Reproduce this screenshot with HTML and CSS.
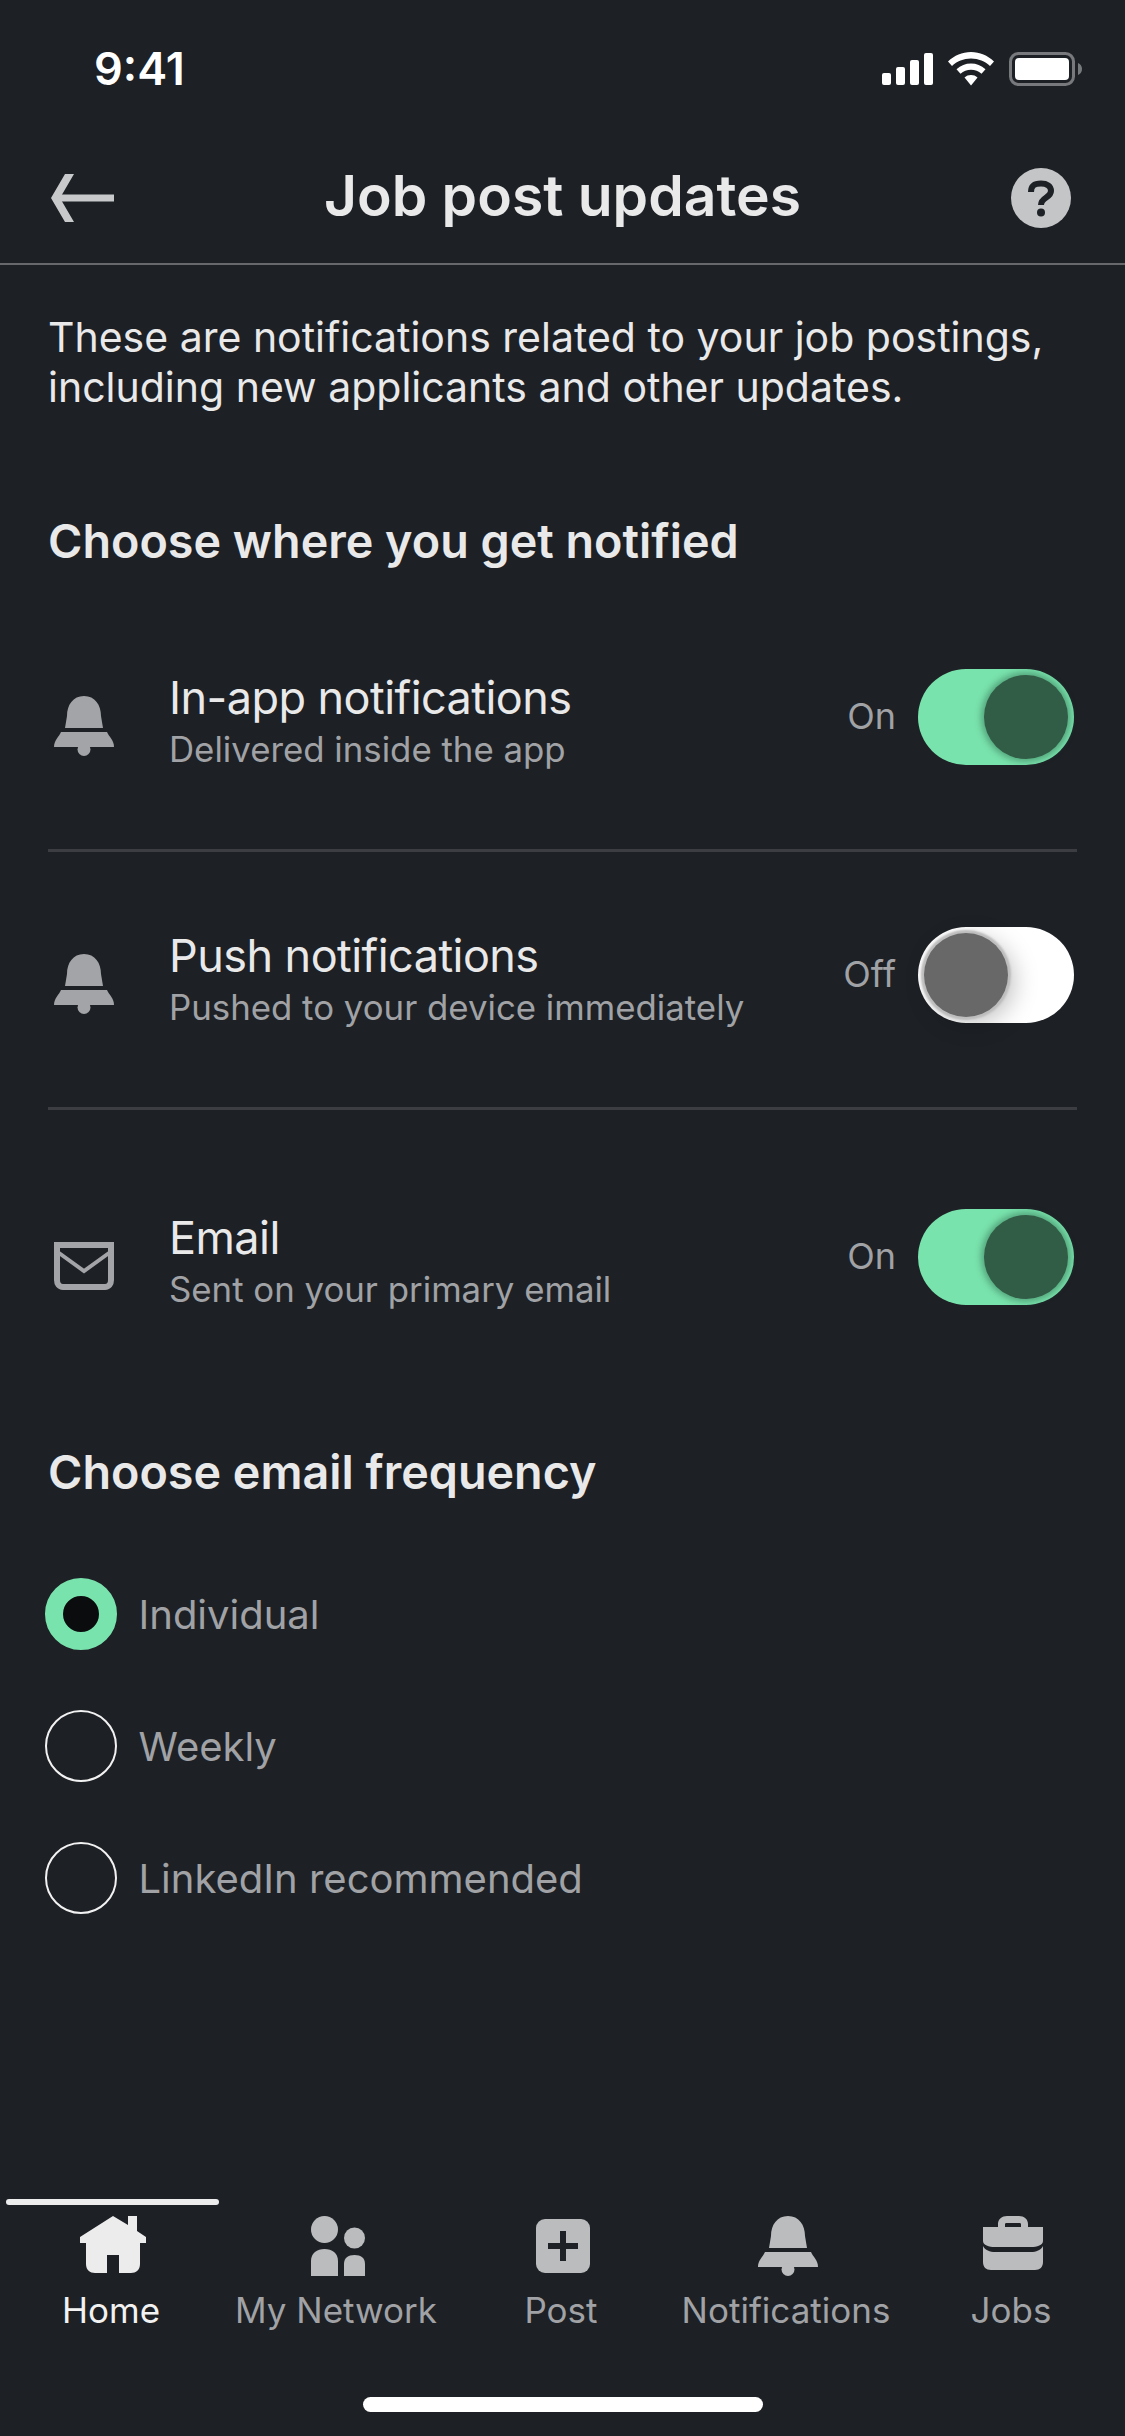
FILE: index.html
```html
<!DOCTYPE html>
<html lang="en">
<head>
    <meta charset="UTF-8">
    <meta name="viewport" content="width=device-width, initial-scale=1.0">
    <title>Job post updates</title>
    <link rel="stylesheet" href="styles.css">
</head>
<body>
    <div class="status-bar">
        <span class="time">9:41</span>
        <div class="status-icons">
            <svg width="51" height="32" viewBox="0 0 51 32" fill="#fff">
                <rect x="0" y="20" width="9" height="12" rx="2"/>
                <rect x="14" y="14" width="9" height="18" rx="2"/>
                <rect x="28" y="7" width="9" height="25" rx="2"/>
                <rect x="42" y="0" width="9" height="32" rx="2"/>
            </svg>
            <svg width="46" height="34" viewBox="0 0 46 34" fill="#fff">
                <path d="M23 0C14 0 6.500 3.500 0 9.500L4 14C9 9.300 15.500 6.500 23 6.500S37 9.300 42 14L46 9.500C39.500 3.500 32 0 23 0Z"/>
                <path d="M23 11.500C17.500 11.500 12.800 13.500 8.500 17.300L12.500 21.700C15.500 19.200 19 17.800 23 17.800S30.500 19.200 33.500 21.700L37.500 17.300C33.200 13.500 28.500 11.500 23 11.500Z"/>
                <path d="M23 23C20.500 23 18.300 23.800 16.500 25.500L23 33.500L29.500 25.500C27.700 23.800 25.500 23 23 23Z"/>
            </svg>
            <svg width="74" height="34" viewBox="0 0 74 34">
                <rect x="1.500" y="1.500" width="63" height="31" rx="8" fill="none" stroke="#77797c" stroke-width="3"/>
                <rect x="6" y="6" width="54" height="22" rx="4" fill="#fff"/>
                <path d="M69 11C71.500 12 73 14 73 17S71.500 22 69 23Z" fill="#77797c"/>
            </svg>
        </div>
    </div>

    <header class="nav">
        <svg class="back" width="64" height="48" viewBox="0 0 64 48" fill="#c8c9cb">
            <polygon points="14,0 23,0 9,24 23,48 14,48 0,24"/>
            <rect x="8" y="20.500" width="55" height="7"/>
        </svg>
        <h1>Job post updates</h1>
        <svg class="help" width="60" height="60" viewBox="0 0 60 60">
            <circle cx="30" cy="30" r="30" fill="#c4c5c7"/>
            <path d="M20 24C20 17 24 15.500 30 15.500S40 18 40 23C40 30 30 29 30 37" fill="none" stroke="#1e2126" stroke-width="6"/>
            <circle cx="30" cy="44.500" r="4" fill="#1e2126"/>
        </svg>
    </header>

    <main class="content">
        <p class="intro">These are notifications related to your job postings, including new applicants and other updates.</p>

        <h2 class="section-title">Choose where you get notified</h2>

        <div class="channel">
            <svg class="channel-icon" width="60" height="60" viewBox="0 0 60 60" fill="#a3a4a7">
                <path d="M30 0C41 0 47 9 47 20L49 32H11L13 20C13 9 19 0 30 0Z"/>
                <path d="M7 36H53C55 41 60 44 60 51H0C0 44 5 41 7 36Z"/>
                <circle cx="30" cy="53.500" r="6.500"/>
            </svg>
            <div class="channel-text">
                <div class="channel-name">In-app notifications</div>
                <div class="channel-desc">Delivered inside the app</div>
            </div>
            <span class="switch-label">On</span>
            <div class="switch on"><div class="knob"></div></div>
        </div>

        <div class="channel">
            <svg class="channel-icon" width="60" height="60" viewBox="0 0 60 60" fill="#a3a4a7">
                <path d="M30 0C41 0 47 9 47 20L49 32H11L13 20C13 9 19 0 30 0Z"/>
                <path d="M7 36H53C55 41 60 44 60 51H0C0 44 5 41 7 36Z"/>
                <circle cx="30" cy="53.500" r="6.500"/>
            </svg>
            <div class="channel-text">
                <div class="channel-name">Push notifications</div>
                <div class="channel-desc">Pushed to your device immediately</div>
            </div>
            <span class="switch-label">Off</span>
            <div class="switch off"><div class="knob"></div></div>
        </div>

        <div class="channel last">
            <svg class="channel-icon" width="60" height="48" viewBox="0 0 60 48" fill="none" stroke="#a3a4a7">
                <path d="M3 3H57V38C57 42 55 45 51 45H9C5 45 3 42 3 38Z" stroke-width="6"/>
                <path d="M5 11L30 29L55 11" stroke-width="4"/>
            </svg>
            <div class="channel-text">
                <div class="channel-name">Email</div>
                <div class="channel-desc">Sent on your primary email</div>
            </div>
            <span class="switch-label">On</span>
            <div class="switch on"><div class="knob"></div></div>
        </div>

        <h2 class="section-title freq">Choose email frequency</h2>

        <div class="radio-list">
            <div class="radio-row"><span class="radio checked"></span>Individual</div>
            <div class="radio-row"><span class="radio"></span>Weekly</div>
            <div class="radio-row"><span class="radio"></span>LinkedIn recommended</div>
        </div>
    </main>

    <nav class="tabs">
        <div class="tab active">
            <svg width="66" height="60" viewBox="0 0 66 60" fill="#ececed">
                <path d="M33 0L48 9V0H57V15L66 21V27H60V48C60 54 56 57 51 57H39V39H27V57H15C10 57 6 54 6 48V27H0V21Z"/>
            </svg>
            <span>Home</span>
        </div>
        <div class="tab">
            <svg width="54" height="60" viewBox="0 0 54 60" fill="#bbbcbe">
                <circle cx="13.500" cy="13.500" r="13.500"/>
                <circle cx="43.500" cy="22" r="10.500"/>
                <path d="M0 60V45C0 37 6 33 13.500 33S27 37 27 45V60Z"/>
                <path d="M33 60V48C33 42 37 39 43.500 39S54 42 54 48V60Z"/>
            </svg>
            <span>My Network</span>
        </div>
        <div class="tab">
            <svg width="54" height="60" viewBox="0 0 54 60">
                <rect x="0" y="3" width="54" height="54" rx="9" fill="#bbbcbe"/>
                <path d="M27 15V45M12 30H42" stroke="#1e2126" stroke-width="6" fill="none"/>
            </svg>
            <span>Post</span>
        </div>
        <div class="tab">
            <svg width="60" height="60" viewBox="0 0 60 60" fill="#bbbcbe">
                <path d="M30 0C41 0 47 9 47 20L49 32H11L13 20C13 9 19 0 30 0Z"/>
                <path d="M7 36H53C55 41 60 44 60 51H0C0 44 5 41 7 36Z"/>
                <circle cx="30" cy="53.500" r="6.500"/>
            </svg>
            <span>Notifications</span>
        </div>
        <div class="tab">
            <svg width="60" height="60" viewBox="0 0 60 60" fill="#bbbcbe">
                <path d="M15 11V8C15 3 19 0 24 0H36C41 0 45 3 45 8V11H60V25C60 29 54 31 48 31H12C6 31 0 29 0 25V11ZM22 11H38V8C38 7 37 7 36 7H24C23 7 22 7 22 8Z" fill-rule="evenodd"/>
                <path d="M0 30C2 34 7 36 12 36H48C53 36 58 34 60 30V46C60 51 57 54 52 54H8C3 54 0 51 0 46Z"/>
            </svg>
            <span>Jobs</span>
        </div>
    </nav>

    <div class="home-bar-wrap"><div class="home-bar"></div></div>
</body>
</html>
```

FILE: styles.css
```css
* {
    box-sizing: border-box;
}

body {
    font-family: Inter, "Noto Sans", sans-serif;
    margin: 0;
    width: 1125px;
    height: 2436px;
    background-color: #1d2025;
    color: #e9e9ea;
    display: flex;
    flex-direction: column;
    overflow: hidden;
}

.status-bar {
    height: 132px;
    padding: 49px 42px 0 94px;
    display: flex;
    justify-content: space-between;
    align-items: flex-start;
}

.time {
    color: #fff;
    font-size: 45px;
    font-weight: 600;
    line-height: 40px;
}

.status-icons {
    display: flex;
    align-items: center;
    gap: 15px;
    margin-top: 3px;
}

.nav {
    height: 133px;
    padding: 0 54px;
    border-bottom: 2px solid #66686b;
    display: grid;
    grid-template-columns: 1fr auto 1fr;
    align-items: center;
}

.back {
    margin-left: -3px;
}

.help {
    justify-self: end;
}

.nav h1 {
    margin: 0 0 4px;
    font-size: 57px;
    font-weight: 600;
}

.content {
    flex: 1;
    padding: 0 48px;
}

.intro {
    margin: 47px 0 0;
    font-size: 41px;
    line-height: 50px;
}

.section-title {
    margin: 101px 0 25px;
    font-size: 46.7px;
    line-height: 56px;
    font-weight: 600;
}

.channel {
    height: 258px;
    padding-bottom: 9px;
    display: flex;
    align-items: center;
    border-bottom: 3px solid #3b3d42;
}

.channel.last {
    height: auto;
    padding: 24px 0 0;
    min-height: 270px;
    border-bottom: none;
}

.channel-icon {
    margin: 18px 0 0 6px;
    flex-shrink: 0;
}

.channel-text {
    flex: 1;
    margin-left: 55px;
    padding-top: 10px;
}

.channel-name {
    font-size: 45px;
    letter-spacing: -0.55px;
    line-height: 54px;
}

.channel-desc {
    font-size: 34.8px;
    line-height: 48px;
    color: #a0a2a5;
}

.switch-label {
    font-size: 36px;
    color: #a0a2a5;
    margin: 0 22px 2px 0;
}

.switch {
    width: 156px;
    height: 96px;
    border-radius: 48px;
    margin-right: 3px;
    display: flex;
    align-items: center;
    padding: 0 6px;
}

.switch.on {
    background-color: #79e3ad;
    justify-content: flex-end;
}

.switch.off {
    background-color: #fff;
    justify-content: flex-start;
}

.knob {
    width: 84px;
    height: 84px;
    border-radius: 50%;
}

.switch.on .knob {
    background-color: #315c46;
    box-shadow: 0 0 6px 3px rgba(40, 90, 65, 0.45);
}

.switch.off .knob {
    background-color: #686868;
    box-shadow: 0 0 2px 3px #bdbdbd, 6px 6px 24px rgba(0, 0, 0, 0.25);
}

.freq {
    margin: 64px 0 0;
}

.radio-list {
    margin-top: 48px;
}

.radio-row {
    height: 132px;
    display: flex;
    align-items: center;
    gap: 21.5px;
    font-size: 40px;
    color: #a0a2a5;
    margin-left: -3px;
}

.radio {
    width: 72px;
    height: 72px;
    border: 2px solid #f2f2f2;
    border-radius: 50%;
}

.radio.checked {
    border: 18px solid #79e3ad;
    background-color: #0b0c0e;
}

.tabs {
    display: flex;
    height: 198px;
}

.tab {
    width: 225px;
    padding-top: 17px;
    display: flex;
    flex-direction: column;
    align-items: center;
    font-size: 35px;
    line-height: 44px;
    color: #a0a2a5;
}

.tab svg {
    margin-bottom: 12px;
}

.tab span {
    margin-right: 3px;
}

.tab.active {
    color: #f2f2f2;
    position: relative;
}

/* underline over the selected tab */
.tab.active::before {
    content: "";
    position: absolute;
    top: 0;
    left: 6px;
    right: 6px;
    height: 6px;
    border-radius: 3px;
    background-color: #ececed;
}

.home-bar-wrap {
    height: 39px;
    display: flex;
    justify-content: center;
}

.home-bar {
    width: 400px;
    height: 15px;
    border-radius: 8px;
    background-color: #fff;
}
```
